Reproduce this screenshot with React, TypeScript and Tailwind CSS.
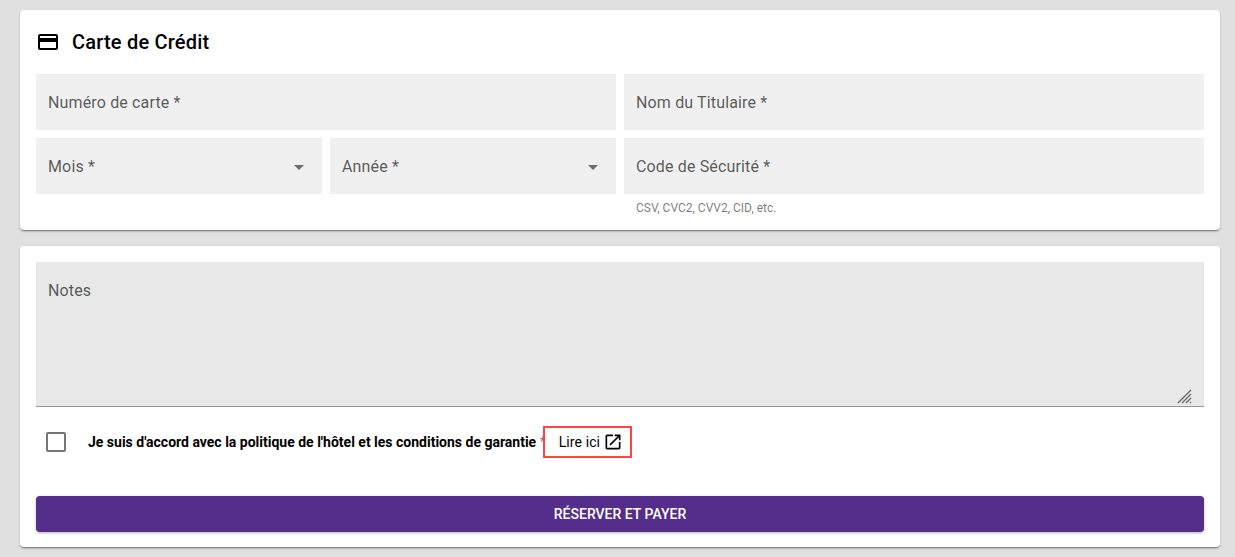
const cardClass =
  'rounded bg-white shadow-[0_2px_2px_-1px_rgba(0,0,0,0.35),0_1px_1px_0_rgba(0,0,0,0.14),0_1px_3px_0_rgba(0,0,0,0.12)]';

function Field({ label }: { label: string }) {
  return (
    <div className="flex h-14 items-center bg-[#f0f0f0] px-3 pt-0.5 text-base tracking-[0.15px] text-[#000000a6]">{label}</div>
  );
}

function SelectField({ label }: { label: string }) {
  return (
    <div className="flex h-14 flex-1 items-center justify-between bg-[#f0f0f0] pl-3 pr-[18px] pt-0.5 text-base tracking-[0.15px] text-[#000000a6]">
      <span>{label}</span>
      <span className="h-0 w-0 border-x-[5px] border-t-[5px] border-x-transparent border-t-[#0000008a]" />
    </div>
  );
}

export default function App() {
  return (
    <div className="flex h-[557px] flex-col gap-4 overflow-hidden bg-[#e0e0e0] pl-5 pr-[15px] pt-2.5 font-['Roboto',sans-serif]">
      <div className={`${cardClass} h-[220px] px-4 pt-2`}>
        <div className="mb-2 flex h-12 items-center gap-3">
          <svg viewBox="0 0 24 24" width="24" height="24" fill="#000">
            <path d="M20 4H4c-1.11 0-1.99.89-1.99 2L2 18c0 1.11.89 2 2 2h16c1.11 0 2-.89 2-2V6c0-1.11-.89-2-2-2zm0 14H4v-6h16v6zm0-10H4V6h16v2z" />
          </svg>
          <h2 className="text-xl font-medium tracking-[0.2px] text-black">Carte de Crédit</h2>
        </div>
        <div className="grid grid-cols-2 gap-x-2">
          <div className="flex flex-col gap-2">
            <Field label="Numéro de carte *" />
            <div className="flex gap-2">
              <SelectField label="Mois *" />
              <SelectField label="Année *" />
            </div>
          </div>
          <div className="flex flex-col gap-2">
            <Field label="Nom du Titulaire *" />
            <div>
              <Field label="Code de Sécurité *" />
              <p className="mt-[7px] px-3 text-xs leading-[14px] text-[#0000008a]">CSV, CVC2, CVV2, CID, etc.</p>
            </div>
          </div>
        </div>
      </div>

      <div className={`${cardClass} h-[301px] p-4`}>
        <div className="relative h-[145px] border-b border-[#00000059] bg-[#e8e8e8] px-3 pt-[18px] text-base leading-[22px] tracking-[0.15px] text-[#000000a6]">
          Notes
          <svg viewBox="0 0 15 15" width="15" height="15" className="absolute bottom-[2px] right-[12px]" stroke="#666" strokeWidth="1.3">
            <path d="M1 14 14 1M5 14l9-9M9 14l5-5M13 14l1-1" />
          </svg>
        </div>
        <div className="mt-[19px] flex h-8 items-center">
          <span className="ml-2.5 h-5 w-5 rounded-[2px] border-2 border-[#0000008a]" />
          <span className="ml-[22px] text-sm font-bold text-black">
            Je suis d'accord avec la politique de l'hôtel et les conditions de garantie <span className="font-normal text-[#0000008a]">*</span>
          </span>
          <span className="-ml-[3px] flex h-8 w-[89px] items-center gap-[3px] border-2 border-[#f44] pl-3.5 text-sm tracking-[0.1px] text-black">
            Lire ici
            <svg viewBox="0 0 24 24" width="20" height="20" fill="#000">
              <path d="M19 19H5V5h7V3H5c-1.11 0-2 .9-2 2v14c0 1.1.89 2 2 2h14c1.1 0 2-.9 2-2v-7h-2v7zM14 3v2h3.59l-9.83 9.83 1.41 1.41L19 6.41V10h2V3h-7z" />
            </svg>
          </span>
        </div>
        <button className="mt-[38px] flex h-9 w-full items-center justify-center rounded bg-[#552d8b] text-sm font-medium text-white shadow-[0_1px_3px_0_rgba(0,0,0,0.3)]">
          RÉSERVER ET PAYER
        </button>
      </div>
    </div>
  );
}
